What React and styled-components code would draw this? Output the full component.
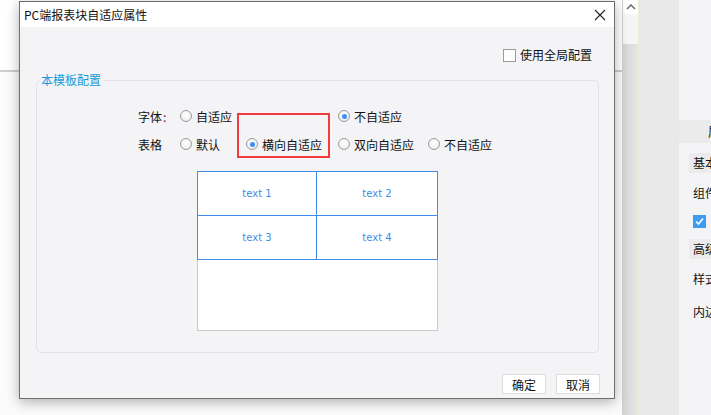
import React from "react";
import styled, { createGlobalStyle } from "styled-components";

const Global = createGlobalStyle`
  html, body { margin: 0; padding: 0; }
  body {
    font-family: "Noto Sans CJK SC", "Noto Sans", sans-serif;
    font-size: 12px;
    color: #111;
    -webkit-font-smoothing: antialiased;
  }
  * { box-sizing: border-box; }
`;

const Page = styled.div`
  position: relative;
  width: 711px;
  height: 415px;
  overflow: hidden;
  display: flex;
  background: #ffffff;
`;

const Backdrop = styled.div`
  width: 623px;
  display: flex;
  flex-direction: column;
  border-right: 1px solid #cfcfcf;
  background: #fbfbfb;
`;

const TopStrip = styled.div`
  height: 72px;
  background: #ffffff;
  border-bottom: 2px solid #cdcdcd;
`;

const ScrollColumn = styled.div`
  width: 15px;
  display: flex;
  flex-direction: column;
`;

const ScrollButton = styled.div`
  height: 14px;
  background: #ffffff;
  display: flex;
  align-items: center;
  justify-content: center;
`;

const ScrollThumb = styled.div`
  height: 30px;
  background: #f5f5f3;
`;

const ScrollTrack = styled.div`
  flex: 1;
  background: linear-gradient(to right, #d4d4d4, #e6e6e6);
`;

const CreamLine = styled.div`
  width: 1px;
  background: #efe9d9;
`;

const GrayColumn = styled.div`
  width: 40px;
  background: #e9e9e9;
`;

const SidePanel = styled.div`
  flex: 1;
  background: #f4f4f6;
  padding-top: 120px;
  display: flex;
  flex-direction: column;
  white-space: nowrap;
  overflow: hidden;
  font-size: 12px;
  color: #111;
`;

const PanelTab = styled.div`
  height: 23px;
  background: #ebebeb;
  padding-left: 29px;
  line-height: 23px;
`;

const SectionHeader = styled.div`
  margin-top: ${(p) => p.$gap}px;
  margin-left: 10px;
  height: 20px;
  line-height: 20px;
  padding-left: 4px;
  background: #ebebeb;
`;

const PanelLine = styled.div`
  margin-top: ${(p) => p.$gap}px;
  height: 20px;
  line-height: 20px;
  padding-left: 14px;
  display: flex;
  align-items: center;
`;

const BlueCheck = styled.span`
  width: 13px;
  height: 13px;
  background: #3d9bf0;
  display: inline-flex;
  align-items: center;
  justify-content: center;
`;

const Dialog = styled.div`
  position: absolute;
  left: 19px;
  top: 1px;
  width: 596px;
  height: 398px;
  border: 1px solid #6f6f6f;
  background: #f4f4f6;
  box-shadow: 0 3px 12px rgba(0, 0, 0, 0.3);
  display: flex;
  flex-direction: column;
`;

const TitleBar = styled.div`
  height: 25px;
  background: #ffffff;
  display: flex;
  align-items: center;
  justify-content: space-between;
  padding: 0 8px 0 4px;
`;

const Title = styled.span`
  font-size: 12px;
  color: #111;
  line-height: 1;
`;

const CloseButton = styled.span`
  display: flex;
  width: 12px;
  height: 12px;
`;

const Body = styled.div`
  flex: 1;
  display: flex;
  flex-direction: column;
  padding: 0 15px 0 16px;
`;

const TopRow = styled.div`
  margin-top: 21px;
  height: 14px;
  display: flex;
  justify-content: flex-end;
  align-items: center;
  padding-right: 7px;
  gap: 4px;
`;

const CheckBox = styled.span`
  width: 13px;
  height: 13px;
  border: 1px solid #9a9a9a;
  background: #fdfdfd;
`;

const Label = styled.span`
  font-size: 12px;
  line-height: 14px;
  color: #111;
  white-space: nowrap;
`;

const Group = styled.fieldset`
  margin: 10px 0 0 0;
  padding: 0;
  height: 281px;
  border: 1px solid #e2e2e6;
  border-radius: 5px;
  display: flex;
  flex-direction: column;
`;

const Legend = styled.legend`
  margin-left: 3px;
  padding: 0 2px 0 1px;
  font-size: 12px;
  line-height: 16px;
  color: #1a9ad8;
`;

const OptionGrid = styled.div`
  position: relative;
  margin-top: 18px;
  margin-left: 101px;
  display: grid;
  grid-template-columns: 42px 66px 92px 90px auto;
  grid-template-rows: 20px 20px;
  row-gap: 8px;
  align-items: center;
  width: 356px;
`;

const RowLabel = styled.span`
  grid-column: 1;
  grid-row: ${(p) => p.$row};
  font-size: 12px;
  color: #111;
  white-space: nowrap;
`;

const Colon = styled.span`
  color: #4d1f5e;
  margin-left: 1px;
`;

const Option = styled.label`
  grid-column: ${(p) => p.$col};
  grid-row: ${(p) => p.$row};
  display: flex;
  align-items: center;
  gap: 4px;
  font-size: 12px;
  color: #111;
  white-space: nowrap;
`;

const Radio = styled.span`
  width: 12px;
  height: 12px;
  border-radius: 50%;
  border: 1px solid #9c9c9c;
  background: radial-gradient(circle at 50% 40%, #ffffff 0%, #f2f2f2 60%, #dcdcdc 100%);
  display: flex;
  align-items: center;
  justify-content: center;
  &::after {
    content: "";
    width: 5px;
    height: 5px;
    border-radius: 50%;
    background: ${(p) => (p.$checked ? "#3d8ef0" : "transparent")};
  }
`;

const Highlight = styled.div`
  position: absolute;
  left: 99px;
  top: 7px;
  width: 93px;
  height: 45px;
  border: 2px solid #f23c3c;
  pointer-events: none;
`;

const Preview = styled.div`
  margin: 17px auto 0;
  width: 241px;
  display: flex;
  flex-direction: column;
`;

const CellGrid = styled.div`
  display: grid;
  grid-template-columns: 119px 1fr;
  border-top: 1px solid #3f8de9;
  border-left: 1px solid #3f8de9;
`;

const Cell = styled.div`
  height: 44px;
  border-right: 1px solid #3f8de9;
  border-bottom: 1px solid #3f8de9;
  display: flex;
  align-items: center;
  justify-content: center;
  font-family: "DejaVu Sans", sans-serif;
  font-size: 10px;
  color: #3f8de9;
  padding-bottom: 1px;
`;

const EmptyArea = styled.div`
  height: 71px;
  background: #ffffff;
  border: 1px solid #c9c9c9;
  border-top: none;
`;

const CellGridWrap = styled.div`
  background: #ffffff;
`;

const ButtonRow = styled.div`
  margin-top: 21px;
  display: flex;
  justify-content: flex-end;
  gap: 10px;
  margin-right: -1px;
`;

const Button = styled.button`
  width: 44px;
  height: 20px;
  padding: 0;
  border: 1px solid #dcdcdc;
  background: #ffffff;
  font-family: "Noto Sans CJK SC", sans-serif;
  font-size: 12px;
  color: #111;
  display: flex;
  align-items: center;
  justify-content: center;
`;

export default function App() {
  return (
    <>
      <Global />
      <Page>
        <Backdrop>
          <TopStrip />
        </Backdrop>
        <ScrollColumn>
          <ScrollButton>
            <svg width="10" height="6" viewBox="0 0 10 6">
              <path d="M1 5 L5 1 L9 5" fill="none" stroke="#707070" strokeWidth="1.6" />
            </svg>
          </ScrollButton>
          <ScrollThumb />
          <ScrollTrack />
        </ScrollColumn>
        <CreamLine />
        <GrayColumn />
        <SidePanel>
          <PanelTab>属性</PanelTab>
          <SectionHeader $gap={10}>基本</SectionHeader>
          <PanelLine $gap={10}>组件</PanelLine>
          <PanelLine $gap={8}>
            <BlueCheck>
              <svg width="11" height="11" viewBox="0 0 11 11">
                <path d="M2 5.5 L4.5 8 L9 2.5" fill="none" stroke="#ffffff" strokeWidth="1.6" />
              </svg>
            </BlueCheck>
          </PanelLine>
          <SectionHeader $gap={8}>高级</SectionHeader>
          <PanelLine $gap={10}>样式</PanelLine>
          <PanelLine $gap={13}>内边</PanelLine>
        </SidePanel>

        <Dialog>
          <TitleBar>
            <Title>PC端报表块自适应属性</Title>
            <CloseButton>
              <svg width="12" height="12" viewBox="0 0 12 12">
                <path d="M1 1 L11 11 M11 1 L1 11" stroke="#222" strokeWidth="1.1" />
              </svg>
            </CloseButton>
          </TitleBar>
          <Body>
            <TopRow>
              <CheckBox />
              <Label>使用全局配置</Label>
            </TopRow>
            <Group>
              <Legend>本模板配置</Legend>
              <OptionGrid>
                <RowLabel $row={1}>
                  字体<Colon>:</Colon>
                </RowLabel>
                <Option $row={1} $col={2}>
                  <Radio />
                  自适应
                </Option>
                <Option $row={1} $col={4}>
                  <Radio $checked />
                  不自适应
                </Option>
                <RowLabel $row={2}>表格</RowLabel>
                <Option $row={2} $col={2}>
                  <Radio />
                  默认
                </Option>
                <Option $row={2} $col={3}>
                  <Radio $checked />
                  横向自适应
                </Option>
                <Option $row={2} $col={4}>
                  <Radio />
                  双向自适应
                </Option>
                <Option $row={2} $col={5}>
                  <Radio />
                  不自适应
                </Option>
                <Highlight />
              </OptionGrid>
              <Preview>
                <CellGridWrap>
                  <CellGrid>
                    <Cell>text 1</Cell>
                    <Cell>text 2</Cell>
                    <Cell>text 3</Cell>
                    <Cell>text 4</Cell>
                  </CellGrid>
                </CellGridWrap>
                <EmptyArea />
              </Preview>
            </Group>
            <ButtonRow>
              <Button>确定</Button>
              <Button>取消</Button>
            </ButtonRow>
          </Body>
        </Dialog>
      </Page>
    </>
  );
}
